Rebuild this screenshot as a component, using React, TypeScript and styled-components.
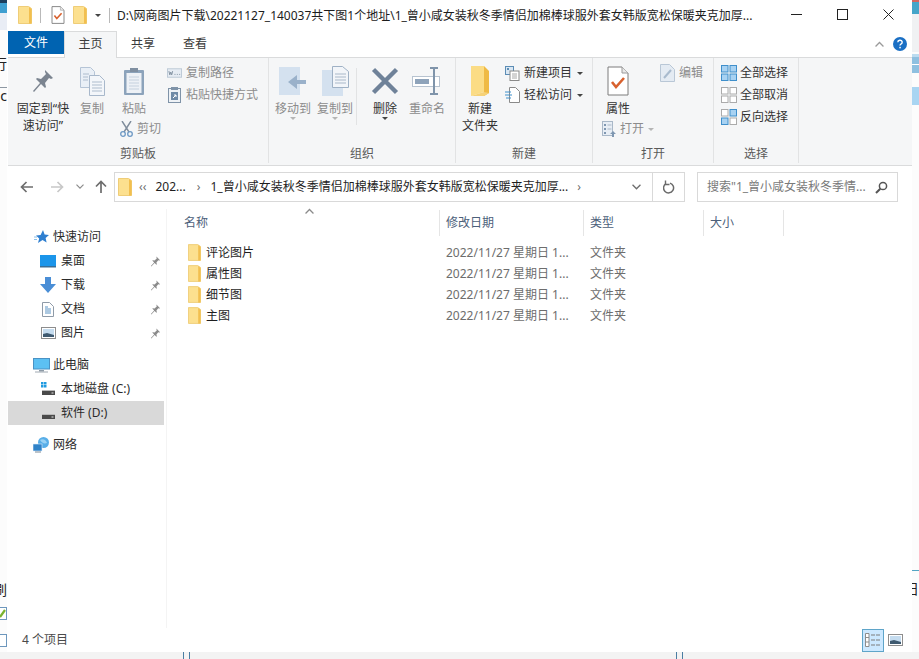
import styled, { createGlobalStyle } from 'styled-components';
import { ReactNode } from 'react';

const GlobalStyle = createGlobalStyle`
    html, body {
        margin: 0;
        padding: 0;
        background: #ffffff;
    }
    body {
        font-family: "Noto Sans", "Noto Sans CJK SC", sans-serif;
        font-size: 12px;
        line-height: 16px;
        color: #333333;
    }
    * {
        box-sizing: border-box;
    }
`;

const Page = styled.div`
    width: 919px;
    height: 659px;
    overflow: hidden;
    display: flex;
    flex-direction: column;
`;

const Desktop = styled.div`
    height: 652px;
    display: flex;
`;

const BottomStrip = styled.div`
    height: 7px;
    background: #f3f3f3;
    position: relative;
`;

const StripTick = styled.span<{ $left: number }>`
    position: absolute;
    top: 0;
    bottom: 0;
    left: ${p => p.$left}px;
    width: 7px;
    border-left: 1px solid #4b7ea3;
    border-right: 1px solid #4b7ea3;
`;

/* what can be seen of the windows behind this one */
const Sliver = styled.div`
    width: 7px;
    flex: none;
    position: relative;
    overflow: hidden;
    background: #fcfcfc;
`;

const BehindBand = styled.div<{ $top: number; $height: number; $color: string }>`
    position: absolute;
    left: 0;
    right: 0;
    top: ${p => p.$top}px;
    height: ${p => p.$height}px;
    background: ${p => p.$color};
`;

const BehindGlyph = styled.span<{ $top: number; $right: number; $color?: string }>`
    position: absolute;
    top: ${p => p.$top}px;
    right: ${p => p.$right}px;
    font-size: 14px;
    line-height: 16px;
    color: ${p => p.$color || '#222222'};
    white-space: nowrap;
`;

const BehindBox = styled.span<{ $top: number; $color: string }>`
    position: absolute;
    top: ${p => p.$top}px;
    left: -6px;
    width: 13px;
    height: 13px;
    border: 1px solid ${p => p.$color};
    background: #ffffff;
    display: flex;
`;

const Window = styled.div`
    width: 905px;
    flex: none;
    padding-left: 1px;
    background: #ffffff;
    display: flex;
    flex-direction: column;
`;

const TitleBar = styled.div`
    height: 30px;
    flex: none;
    display: flex;
    align-items: center;
    padding-left: 10px;
`;

const QuickIcon = styled.span<{ $gap: number }>`
    display: flex;
    margin-right: ${p => p.$gap}px;
`;

const TitleSep = styled.span<{ $gap: number }>`
    width: 1px;
    height: 15px;
    background: #b9b9b9;
    margin-right: ${p => p.$gap}px;
`;

const TitleText = styled.div`
    width: 660px;
    white-space: nowrap;
    overflow: hidden;
    color: #1c1c1c;
    margin-top: 1px;
`;

const WindowButtons = styled.div`
    display: flex;
    margin-left: auto;
    margin-top: -1px;
`;

const WindowButton = styled.span`
    width: 45px;
    height: 29px;
    display: flex;
    align-items: center;
    justify-content: center;
    margin-right: 1px;
`;

const TabRow = styled.div`
    height: 28px;
    flex: none;
    display: flex;
    align-items: flex-start;
    padding-top: 1px;
    margin-bottom: -1px;
    position: relative;
`;

const FileTab = styled.div`
    width: 56px;
    height: 23px;
    background: #0063b1;
    color: #ffffff;
    display: flex;
    align-items: center;
    justify-content: center;
`;

const Tab = styled.div<{ $active?: boolean }>`
    width: ${p => (p.$active ? 53 : 52)}px;
    height: 27px;
    padding-bottom: 3px;
    display: flex;
    align-items: center;
    justify-content: center;
    color: #3a3a3a;
    background: ${p => (p.$active ? '#f5f6f7' : 'transparent')};
    border: 1px solid ${p => (p.$active ? '#dadbdc' : 'transparent')};
    border-bottom: none;
    position: relative;
    z-index: 1;
`;

const TabEnd = styled.div`
    margin-left: auto;
    display: flex;
    align-items: center;
    height: 26px;
    gap: 9px;
    padding-right: 5px;
`;

const Ribbon = styled.div`
    height: 109px;
    flex: none;
    display: flex;
    background: #f5f6f7;
    border-top: 1px solid #dadbdc;
    border-bottom: 1px solid #dadbdc;
`;

const Group = styled.section<{ $width: number }>`
    width: ${p => p.$width}px;
    flex: none;
    display: flex;
    flex-direction: column;
    border-right: 1px solid #e2e3e4;
    margin-bottom: 2px;
`;

const GroupBody = styled.div`
    height: 86px;
    flex: none;
    padding-top: 4px;
    display: flex;
    align-items: flex-start;
`;

const GroupLabel = styled.div`
    text-align: center;
    color: #5a5a5a;
    line-height: 16px;
    padding-top: 2px;
`;

const BigButton = styled.div<{ $width: number; $off?: boolean }>`
    width: ${p => p.$width}px;
    flex: none;
    display: flex;
    flex-direction: column;
    align-items: center;
    text-align: center;
    line-height: 17px;
    color: ${p => (p.$off ? '#8c8c8c' : '#333333')};
`;

const IconSlot = styled.div`
    height: 38px;
    display: flex;
    align-items: center;
    justify-content: center;
`;

const Caret = styled.span<{ $off?: boolean }>`
    display: block;
    width: 0;
    height: 0;
    border-left: 3px solid transparent;
    border-right: 3px solid transparent;
    border-top: 3px solid ${p => (p.$off ? '#b5b5b5' : '#444444')};
`;

const SmallColumn = styled.div<{ $width?: number; $indent?: number }>`
    display: flex;
    flex-direction: column;
    flex: none;
    width: ${p => (p.$width ? `${p.$width}px` : 'auto')};
    margin-left: ${p => p.$indent || 0}px;
`;

const SmallButton = styled.div<{ $off?: boolean }>`
    height: 22px;
    display: flex;
    align-items: center;
    gap: 4px;
    white-space: nowrap;
    color: ${p => (p.$off ? '#8c8c8c' : '#333333')};
`;

const TileButton = styled(SmallButton)`
    gap: 3px;
`;

const SmallIcon = styled.span`
    width: 15px;
    height: 16px;
    flex: none;
    display: flex;
    align-items: center;
    justify-content: center;
`;

const RowCaret = styled(Caret)`
    margin-left: 1px;
`;

const ButtonSep = styled.div`
    width: 1px;
    height: 57px;
    margin: 6px 0 0;
    background: #e2e3e4;
    flex: none;
`;

const PasteColumn = styled.div`
    width: 48px;
    flex: none;
    display: flex;
    flex-direction: column;
`;

const CutRow = styled(SmallButton)<{ $indent: number }>`
    height: 20px;
    margin: 2px 0 0 ${p => p.$indent}px;
`;

const AddressRow = styled.div`
    height: 43px;
    flex: none;
    display: flex;
    align-items: flex-start;
    padding-top: 6px;
`;

const NavButtons = styled.div`
    width: 106px;
    flex: none;
    height: 30px;
    display: flex;
    align-items: center;
    padding-left: 12px;
`;

const NavButton = styled.span<{ $width: number; $gap?: number }>`
    width: ${p => p.$width}px;
    margin-left: ${p => p.$gap || 0}px;
    flex: none;
    display: flex;
    justify-content: center;
`;

const AddressBox = styled.div`
    width: 571px;
    height: 30px;
    flex: none;
    border: 1px solid #d9d9d9;
    display: flex;
    align-items: center;
    padding-left: 3px;
`;

const Crumbs = styled.div`
    flex: 1;
    display: flex;
    align-items: center;
    white-space: nowrap;
    color: #1e1e1e;
    margin-left: 5px;
`;

const CrumbArrow = styled.span<{ $before: number; $after: number }>`
    color: #6d6d6d;
    margin: 0 ${p => p.$after}px 0 ${p => p.$before}px;
    font-size: 12px;
`;

const AddressEnd = styled.span`
    width: 32px;
    height: 28px;
    flex: none;
    display: flex;
    align-items: center;
    justify-content: center;
`;

const RefreshCell = styled(AddressEnd)`
    border-left: 1px solid #d9d9d9;
`;

const SearchBox = styled.div`
    width: 201px;
    height: 30px;
    margin-left: 12px;
    flex: none;
    border: 1px solid #d9d9d9;
    display: flex;
    align-items: center;
    justify-content: space-between;
    padding: 0 9px 0 9px;
    color: #7a7a7a;
    white-space: nowrap;
`;

const Body = styled.div`
    flex: 1;
    min-height: 0;
    display: flex;
`;

const NavPane = styled.nav`
    width: 159px;
    flex: none;
    padding-top: 16px;
    border-right: 1px solid #f4f4f4;
    margin-right: 11px;
`;

const NavItem = styled.div<{ $level: number; $selected?: boolean; $gapAfter?: boolean }>`
    height: 24px;
    width: 156px;
    display: flex;
    align-items: center;
    padding-left: ${p => (p.$level === 0 ? 24 : 31)}px;
    gap: ${p => (p.$level === 0 ? 3 : 4)}px;
    background: ${p => (p.$selected ? '#d9d9d9' : 'transparent')};
    margin-bottom: ${p => (p.$gapAfter ? 8 : 0)}px;
    color: #2b2b2b;
    white-space: nowrap;
`;

const NavIcon = styled.span`
    width: 18px;
    height: 18px;
    flex: none;
    display: flex;
    align-items: center;
    justify-content: center;
`;

const NavPin = styled.span`
    margin-left: auto;
    margin-right: 3px;
    display: flex;
`;

const FilePane = styled.main`
    flex: 1;
    display: flex;
    flex-direction: column;
`;

const ColumnHeader = styled.header`
    height: 33px;
    flex: none;
    display: flex;
    position: relative;
`;

const HeaderCell = styled.div<{ $width: number }>`
    width: ${p => p.$width}px;
    flex: none;
    height: 26px;
    margin-top: 1px;
    border-right: 1px solid #e5e5e5;
    padding-left: 6px;
    display: flex;
    align-items: center;
    color: #4c607a;
`;

const SortMark = styled.span`
    position: absolute;
    top: -1px;
    left: 127px;
    display: flex;
`;

const FileRow = styled.div`
    height: 21px;
    display: flex;
    align-items: center;
`;

const NameCell = styled.div`
    width: 262px;
    flex: none;
    padding-left: 10px;
    display: flex;
    align-items: center;
    gap: 5px;
    color: #1e1e1e;
`;

const DateCell = styled.div`
    width: 144px;
    flex: none;
    padding-left: 6px;
    color: #6d6d6d;
    white-space: nowrap;
`;

const TypeCell = styled.div`
    flex: none;
    padding-left: 6px;
    color: #6d6d6d;
`;

const StatusBar = styled.footer`
    height: 24px;
    flex: none;
    display: flex;
    align-items: center;
    padding-left: 14px;
    color: #4a4a4a;
    padding-top: 0;
`;

const StatusViews = styled.div`
    margin-left: auto;
    display: flex;
    align-items: center;
    gap: 4px;
    padding-right: 9px;
`;

const ViewButton = styled.span`
    width: 22px;
    height: 23px;
    display: flex;
    align-items: center;
    justify-content: center;
    background: #cce8ff;
    border: 1px solid #5fa5c9;
`;

const Folder = ({ w = 14, h = 18 }: { w?: number; h?: number }) => (
    <svg width={w} height={h} viewBox="0 0 14 18">
        <path d="M0.5 0.5h10l3 2v15h-13z" fill="#fce08f" stroke="#efcd78" />
        <path d="M11 1l2.5 2v14.5h-2.5z" fill="#f2bf4f" />
    </svg>
);

const TallFolder = () => (
    <svg width="20" height="32" viewBox="0 0 20 32">
        <path d="M1 1h13v26l-13 4z" fill="#fbdc85" />
        <path d="M14 1l5 5v22l-5 3z" fill="#efba45" />
        <path d="M1 31l13-4 5 1-5 3z" fill="#f6d277" />
    </svg>
);

const DocCheck = ({ large }: { large?: boolean }) => (
    <svg width={large ? 22 : 14} height={large ? 30 : 18} viewBox="0 0 22 30">
        <path d="M1 1h14l6 6v22H1z" fill="#ffffff" stroke="#7d7d7d" strokeWidth={large ? 1 : 1.5} />
        <path d="M15 1v6h6" fill="#e8e8e8" stroke="#9a9a9a" />
        <path d="M5 16l4 5 8-9" fill="none" stroke="#d8612e" strokeWidth="2.6" />
    </svg>
);

const Pin = () => (
    <svg width="22" height="24" viewBox="0 0 22 24">
        <path d="M13 1l8 8-2 1-2-1-4 5 1 4-1 1-4-4-7 8-1-1 7-8-4-4 1-1 4 1 5-5-1-2z" fill="#7b8490" />
    </svg>
);

const SmallPin = () => (
    <svg width="11" height="11" viewBox="0 0 22 24">
        <path d="M13 1l8 8-2 1-2-1-4 5 1 4-1 1-4-4-7 8-1-1 7-8-4-4 1-1 4 1 5-5-1-2z" fill="#8b8b8b" />
    </svg>
);

const Sheets = () => (
    <svg width="25" height="29" viewBox="0 0 25 29">
        <path d="M.5.5h10l4 4v16H.5z" fill="#e9eff6" stroke="#b5c4d6" />
        <path d="M9.5 8.5h10l5 5v15h-15z" fill="#f3f6fa" stroke="#a8b8cb" />
        <path d="M12 15h10M12 18h10M12 21h10M12 24h10M3 7h6M3 10h5M3 13h5" stroke="#adbccd" />
    </svg>
);

const Clipboard = () => (
    <svg width="22" height="29" viewBox="0 0 22 29">
        <rect x="1" y="3" width="20" height="25" rx="1" fill="#8ca3bb" />
        <rect x="3.5" y="6" width="15" height="20" fill="#edf1f6" />
        <path d="M6 10h10M6 13h10M6 16h10M6 19h10M6 22h10" stroke="#c5d1de" />
        <rect x="7" y="1" width="8" height="4" fill="#7f8fa1" />
    </svg>
);

const Scissors = () => (
    <svg width="13" height="16" viewBox="0 0 13 16">
        <path d="M2 0l7 11M11 0L4 11" stroke="#7f8c9b" strokeWidth="1.4" fill="none" />
        <circle cx="3" cy="13" r="2.3" fill="none" stroke="#6d98c4" strokeWidth="1.3" />
        <circle cx="10" cy="13" r="2.3" fill="none" stroke="#6d98c4" strokeWidth="1.3" />
    </svg>
);

const CopyPath = () => (
    <svg width="16" height="10" viewBox="0 0 16 10">
        <rect x=".5" y=".5" width="15" height="9" fill="#e6ecf3" stroke="#bcc8d5" />
        <path d="M2 3l1 4 1-3 1 3 1-4M8 6.5h1M10.5 6.5h1M13 6.5h1" stroke="#7f8f9f" fill="none" />
    </svg>
);

const PasteShortcut = () => (
    <svg width="13" height="16" viewBox="0 0 13 16">
        <rect x=".5" y="1.5" width="12" height="14" fill="#eef2f6" stroke="#7f93a8" />
        <rect x="3" y="0" width="7" height="3" fill="#7f93a8" />
        <rect x="3" y="5" width="7" height="8" fill="#6e8aa6" />
        <path d="M5 11l3-3M6 8h2v2" stroke="#ffffff" fill="none" />
    </svg>
);

const MoveTo = () => (
    <svg width="28" height="30" viewBox="0 0 28 30">
        <rect x="0" y="1" width="21" height="28" fill="#d4e1ef" />
        <path d="M27 14H18V9l-9 7 9 7v-5h9z" fill="#9ab1ca" />
    </svg>
);

const CopyTo = () => (
    <svg width="27" height="31" viewBox="0 0 27 31">
        <rect x="0" y="4" width="21" height="26" fill="#d4e1ef" />
        <path d="M10.5.5h10l6 5v16h-16z" fill="#f2f5f9" stroke="#9fb1c5" />
        <path d="M13 8h11M13 11h11M13 14h11M13 17h11" stroke="#a9b8c9" />
    </svg>
);

const DeleteX = () => (
    <svg width="28" height="28" viewBox="0 0 28 28">
        <path d="M2.5 2.5l23 23M25.5 2.5l-23 23" stroke="#6f8299" strokeWidth="4.4" />
    </svg>
);

const Rename = () => (
    <svg width="30" height="28" viewBox="0 0 30 28">
        <rect x=".5" y="9.5" width="27" height="10" fill="#ffffff" stroke="#b7c3d0" />
        <rect x="3" y="12" width="14" height="5" fill="#8ea3ba" />
        <path d="M18 1h8M22 1v26M18 27h8" stroke="#7f94aa" strokeWidth="2" fill="none" />
    </svg>
);

const NewItem = () => (
    <svg width="15" height="15" viewBox="0 0 15 15">
        <rect x=".5" y=".5" width="8" height="8" fill="#d9e7f3" stroke="#5c8db5" />
        <rect x="2" y="2" width="2" height="2" fill="#5c8db5" />
        <rect x="5" y="5" width="9" height="9.5" fill="#ffffff" stroke="#8a8a8a" />
        <path d="M7 8h5M7 10h5M7 12h5" stroke="#a8a8a8" />
    </svg>
);

const EasyAccess = () => (
    <svg width="15" height="16" viewBox="0 0 15 16">
        <path d="M4.5.5h6l4 4v11h-10z" fill="#ffffff" stroke="#8a8a8a" />
        <path d="M0 5h6M0 8h7M1 11h5" stroke="#3f8fcb" strokeWidth="1.2" />
    </svg>
);

const EditDoc = () => (
    <svg width="15" height="18" viewBox="0 0 15 18">
        <path d="M.5.5h9l5 5v12H.5z" fill="#e4ebf3" stroke="#b9c7d6" />
        <path d="M4 14l7-8" stroke="#a9bbce" strokeWidth="2" />
    </svg>
);

const OpenDoc = () => (
    <svg width="14" height="16" viewBox="0 0 14 16">
        <rect x=".5" y=".5" width="10" height="14" fill="#e8eef5" stroke="#a9b8c8" />
        <path d="M2 3h2v2H2zM2 7h2v2H2zM2 11h2v2H2z" fill="#7f97b1" />
        <path d="M5.5 4h4M5.5 8h4" stroke="#a9b8c8" />
        <path d="M8 13l3-3 3 3h-2v3h-2v-3z" fill="#7f97b1" />
    </svg>
);

const Tiles = ({ on }: { on: boolean[] }) => (
    <svg width="16" height="16" viewBox="0 0 16 16">
        {[0, 1, 2, 3].map(i => (
            <rect
                key={i}
                x={i % 2 ? 9 : 0.5}
                y={i > 1 ? 9 : 0.5}
                width="6.5"
                height="6.5"
                fill={on[i] ? '#a8d2f2' : '#ffffff'}
                stroke={on[i] ? '#3f8fcb' : '#ababab'}
            />
        ))}
    </svg>
);

const BackArrow = ({ color, flip }: { color: string; flip?: boolean }) => (
    <svg width="14" height="12" viewBox="0 0 14 12" style={flip ? { transform: 'scaleX(-1)' } : undefined}>
        <path d="M13 6H2M6.5 1L1.5 6l5 5" stroke={color} strokeWidth="1.7" fill="none" />
    </svg>
);

const UpArrow = () => (
    <svg width="12" height="14" viewBox="0 0 12 14">
        <path d="M6 13V2M1 6.5l5-5 5 5" stroke="#6d6d6d" strokeWidth="1.7" fill="none" />
    </svg>
);

const Chevron = ({ color, up, size = 9 }: { color: string; up?: boolean; size?: number }) => (
    <svg width={size} height={size * 0.66} viewBox="0 0 9 6">
        <path d={up ? 'M.5 5.5l4-4 4 4' : 'M.5.8l4 4 4-4'} stroke={color} strokeWidth="1.3" fill="none" />
    </svg>
);

const Refresh = () => (
    <svg width="12" height="14" viewBox="0 0 12 14">
        <path d="M3 3.6a5 5 0 1 0 4-.5" stroke="#6a6a6a" strokeWidth="1.5" fill="none" />
        <path d="M2.5 0.5v4h4" stroke="#6a6a6a" strokeWidth="1.4" fill="none" />
    </svg>
);

const Magnifier = () => (
    <svg width="13" height="13" viewBox="0 0 13 13">
        <circle cx="8" cy="5" r="3.6" fill="none" stroke="#555555" strokeWidth="1.5" />
        <path d="M5.3 7.7L1 12" stroke="#555555" strokeWidth="2" />
    </svg>
);

const StarIcon = () => (
    <svg width="15" height="14" viewBox="0 0 15 14">
        <path d="M9 0l1.6 4.4L15 5l-3.4 3 1 4.6L8.5 10 4 13l1.2-4.6L2 5.5l4.6-.6z" fill="#2f7fd0" />
        <path d="M0 7h3M0 9.500h3" stroke="#8cc0ea" />
    </svg>
);

const DesktopIcon = () => (
    <svg width="16" height="13" viewBox="0 0 16 13">
        <rect x="0" y="0" width="16" height="11" fill="#1b95ea" />
        <rect x="0" y="11" width="16" height="1.500" fill="#3a6e96" />
    </svg>
);

const DownloadIcon = () => (
    <svg width="16" height="16" viewBox="0 0 16 16">
        <path d="M5 0h6v7h5l-8 9-8-9h5z" fill="#4a8ed6" />
    </svg>
);

const DocsIcon = () => (
    <svg width="12" height="15" viewBox="0 0 12 15">
        <path d="M.5.500h7l4 4v10H.5z" fill="#ffffff" stroke="#8f9ba8" />
        <path d="M3 5h3M3 7h6M3 9h6M3 11h6" stroke="#5b93c4" />
    </svg>
);

const PictureIcon = () => (
    <svg width="15" height="12" viewBox="0 0 15 12">
        <rect x=".5" y=".5" width="14" height="11" fill="#ffffff" stroke="#8d8d8d" />
        <rect x="2" y="2" width="11" height="8" fill="#c5dcef" />
        <path d="M2 10V7l4-1 7 2v2z" fill="#3f5a70" />
    </svg>
);

const PcIcon = () => (
    <svg width="17" height="15" viewBox="0 0 17 15">
        <rect x=".5" y=".5" width="16" height="10.500" fill="#5cc0f3" stroke="#4a92c4" />
        <path d="M6 12h5v1.500H6z" fill="#8d9aa6" />
        <path d="M2 14h13" stroke="#a0a9b2" />
    </svg>
);

const DiskIcon = ({ windows }: { windows?: boolean }) => (
    <svg width="15" height="14" viewBox="0 0 15 14">
        {windows && <path d="M0 0h2.500v2.500H0zM3 0h2.500v2.500H3zM0 3h2.500v2.500H0zM3 3h2.500v2.500H3z" fill="#1f9ae0" />}
        <path d="M1 8h13v1H1z" fill="#b9b9b9" />
        <rect x="1" y="9" width="13" height="4" fill="#4a4a4a" />
        <path d="M10.500 11h2" stroke="#e5e5e5" />
    </svg>
);

const NetworkIcon = () => (
    <svg width="17" height="16" viewBox="0 0 17 16">
        <circle cx="10.500" cy="5.500" r="5.500" fill="#58aee8" />
        <path d="M7 3c3-2 6 0 7 3-3 1-5 0-7-3z" fill="#9ad2f5" />
        <rect x="0" y="7" width="9" height="7" fill="#2f82c8" stroke="#dfeefa" strokeWidth=".6" />
        <path d="M2 15h6" stroke="#7d8a96" />
    </svg>
);

const DetailsView = () => (
    <svg width="16" height="14" viewBox="0 0 16 14">
        <path d="M.5.500h3.500v13H.5z" fill="#ffffff" stroke="#8d8d8d" />
        <path d="M.5 4.500h3.500M.5 9h3.500" stroke="#8d8d8d" />
        <path d="M6 2h4M11 2h4M6 7h4M11 7h4M6 12h4M11 12h4" stroke="#7d7d7d" />
    </svg>
);

function Big({ width, off, label, children, caret }: {
    width: number; off?: boolean; label: ReactNode; children: ReactNode; caret?: boolean;
}) {
    return (
        <BigButton $width={width} $off={off}>
            <IconSlot>{children}</IconSlot>
            <div>{label}</div>
            {caret && <Caret $off={off} />}
        </BigButton>
    );
}

const navItems = [
    { label: '快速访问', level: 0, icon: <StarIcon /> },
    { label: '桌面', level: 1, icon: <DesktopIcon />, pin: true },
    { label: '下载', level: 1, icon: <DownloadIcon />, pin: true },
    { label: '文档', level: 1, icon: <DocsIcon />, pin: true },
    { label: '图片', level: 1, icon: <PictureIcon />, pin: true, gapAfter: true },
    { label: '此电脑', level: 0, icon: <PcIcon /> },
    { label: '本地磁盘 (C:)', level: 1, icon: <DiskIcon windows /> },
    { label: '软件 (D:)', level: 1, icon: <DiskIcon />, selected: true, gapAfter: true },
    { label: '网络', level: 0, icon: <NetworkIcon /> },
];

const files = ['评论图片', '属性图', '细节图', '主图'];

export default function App() {
    return (
        <Page>
            <GlobalStyle />
            <Desktop>
                <Sliver>
                    <BehindBand $top={0} $height={3} $color="#1d3f5e" />
                    <BehindBand $top={3} $height={10} $color="#3f9fd0" />
                    <BehindBand $top={13} $height={17} $color="#e9edf5" />
                    <BehindGlyph $top={56} $right={0}>行</BehindGlyph>
                    <BehindBand $top={87} $height={1} $color="#8e98a3" />
                    <BehindGlyph $top={88} $right={0}>c</BehindGlyph>
                    <BehindGlyph $top={582} $right={0}>刷</BehindGlyph>
                    <BehindBox $top={607} $color="#6d97bd">
                        <svg width="11" height="11" viewBox="0 0 11 11">
                            <path d="M5 9l5-7" stroke="#7ab32f" strokeWidth="2.200" fill="none" />
                        </svg>
                    </BehindBox>
                    <BehindBox $top={634} $color="#6d97bd" />
                </Sliver>
                <Window>
                    <TitleBar>
                        <QuickIcon $gap={8}><Folder /></QuickIcon>
                        <TitleSep $gap={10} />
                        <QuickIcon $gap={8}><DocCheck /></QuickIcon>
                        <QuickIcon $gap={8}><Folder /></QuickIcon>
                        <QuickIcon $gap={8}><Caret /></QuickIcon>
                        <TitleSep $gap={7} />
                        <TitleText>D:\网商图片下载\20221127_140037共下图1个地址\1_曾小咸女装秋冬季情侣加棉棒球服外套女韩版宽松保暖夹克加厚...</TitleText>
                        <WindowButtons>
                            <WindowButton>
                                <svg width="11" height="11" viewBox="0 0 11 11"><path d="M0 5.500h11" stroke="#222222" /></svg>
                            </WindowButton>
                            <WindowButton>
                                <svg width="11" height="11" viewBox="0 0 11 11"><rect x=".5" y=".5" width="10" height="10" fill="none" stroke="#222222" /></svg>
                            </WindowButton>
                            <WindowButton>
                                <svg width="11" height="11" viewBox="0 0 11 11"><path d="M.5.500l10 10M10.500.500l-10 10" stroke="#222222" /></svg>
                            </WindowButton>
                        </WindowButtons>
                    </TitleBar>
                    <TabRow>
                        <FileTab>文件</FileTab>
                        <Tab $active>主页</Tab>
                        <Tab>共享</Tab>
                        <Tab>查看</Tab>
                        <TabEnd>
                            <Chevron color="#9a9a9a" up />
                            <svg width="14" height="14" viewBox="0 0 14 14">
                                <circle cx="7" cy="7" r="7" fill="#1a6fc4" />
                                <path d="M4.800 5.200a2.200 2 0 1 1 3.200 1.800c-.8.500-1 .8-1 1.600" stroke="#ffffff" strokeWidth="1.400" fill="none" />
                                <rect x="6.300" y="9.800" width="1.500" height="1.500" fill="#ffffff" />
                            </svg>
                        </TabEnd>
                    </TabRow>
                    <Ribbon>
                        <Group $width={261}>
                            <GroupBody>
                                <SmallColumn $indent={8} />
                                <Big width={54} label={<>固定到“快<br />速访问”</>}><Pin /></Big>
                                <Big width={44} off label="复制"><Sheets /></Big>
                                <PasteColumn>
                                    <Big width={40} off label="粘贴"><Clipboard /></Big>
                                    <CutRow $off $indent={6}>
                                        <Scissors />
                                        <span>剪切</span>
                                    </CutRow>
                                </PasteColumn>
                                <SmallColumn $indent={5}>
                                    <SmallButton $off><SmallIcon><CopyPath /></SmallIcon>复制路径</SmallButton>
                                    <SmallButton $off><SmallIcon><PasteShortcut /></SmallIcon>粘贴快捷方式</SmallButton>
                                </SmallColumn>
                            </GroupBody>
                            <GroupLabel>剪贴板</GroupLabel>
                        </Group>
                        <Group $width={187}>
                            <GroupBody>
                                <SmallColumn $indent={3} />
                                <Big width={42} off caret label="移动到"><MoveTo /></Big>
                                <Big width={42} off caret label="复制到"><CopyTo /></Big>
                                <ButtonSep />
                                <SmallColumn $indent={7} />
                                <Big width={42} caret label="删除"><DeleteX /></Big>
                                <Big width={42} off label="重命名"><Rename /></Big>
                            </GroupBody>
                            <GroupLabel>组织</GroupLabel>
                        </Group>
                        <Group $width={137}>
                            <GroupBody>
                                <SmallColumn $indent={2} />
                                <Big width={44} label={<>新建<br />文件夹</>}><TallFolder /></Big>
                                <SmallColumn $indent={3}>
                                    <SmallButton><SmallIcon><NewItem /></SmallIcon>新建项目<RowCaret /></SmallButton>
                                    <SmallButton><SmallIcon><EasyAccess /></SmallIcon>轻松访问<RowCaret /></SmallButton>
                                </SmallColumn>
                            </GroupBody>
                            <GroupLabel>新建</GroupLabel>
                        </Group>
                        <Group $width={121}>
                            <GroupBody>
                                <SmallColumn $width={60} $indent={7}>
                                    <BigButton $width={36}>
                                        <IconSlot><DocCheck large /></IconSlot>
                                        <div>属性</div>
                                    </BigButton>
                                    <CutRow $off $indent={2}>
                                        <OpenDoc />
                                        <span>打开</span>
                                        <Caret $off />
                                    </CutRow>
                                </SmallColumn>
                                <SmallColumn>
                                    <SmallButton $off><SmallIcon><EditDoc /></SmallIcon>编辑</SmallButton>
                                </SmallColumn>
                            </GroupBody>
                            <GroupLabel>打开</GroupLabel>
                        </Group>
                        <Group $width={85}>
                            <GroupBody>
                                <SmallColumn $indent={7}>
                                    <TileButton><Tiles on={[true, true, true, true]} />全部选择</TileButton>
                                    <TileButton><Tiles on={[false, false, false, false]} />全部取消</TileButton>
                                    <TileButton><Tiles on={[false, true, true, false]} />反向选择</TileButton>
                                </SmallColumn>
                            </GroupBody>
                            <GroupLabel>选择</GroupLabel>
                        </Group>
                    </Ribbon>
                    <AddressRow>
                        <NavButtons>
                            <NavButton $width={14}><BackArrow color="#6d6d6d" /></NavButton>
                            <NavButton $width={14} $gap={16}><BackArrow color="#c8c8c8" flip /></NavButton>
                            <NavButton $width={10} $gap={11}><Chevron color="#8a8a8a" size={8} /></NavButton>
                            <NavButton $width={14} $gap={9}><UpArrow /></NavButton>
                        </NavButtons>
                        <AddressBox>
                            <Folder />
                            <Crumbs>
                                <CrumbArrow $before={2} $after={9}>‹‹</CrumbArrow>
                                <span>202...</span>
                                <CrumbArrow $before={11} $after={10}>›</CrumbArrow>
                                <span>1_曾小咸女装秋冬季情侣加棉棒球服外套女韩版宽松保暖夹克加厚...</span>
                                <CrumbArrow $before={9} $after={9}>›</CrumbArrow>
                            </Crumbs>
                            <AddressEnd><Chevron color="#6d6d6d" /></AddressEnd>
                            <RefreshCell><Refresh /></RefreshCell>
                        </AddressBox>
                        <SearchBox>
                            <span>搜索"1_曾小咸女装秋冬季情...</span>
                            <Magnifier />
                        </SearchBox>
                    </AddressRow>
                    <Body>
                        <NavPane>
                            {navItems.map(item => (
                                <NavItem key={item.label} $level={item.level} $selected={item.selected} $gapAfter={item.gapAfter}>
                                    <NavIcon>{item.icon}</NavIcon>
                                    <span>{item.label}</span>
                                    {item.pin && <NavPin><SmallPin /></NavPin>}
                                </NavItem>
                            ))}
                        </NavPane>
                        <FilePane>
                            <ColumnHeader>
                                <SortMark><Chevron color="#8a8a8a" up /></SortMark>
                                <HeaderCell $width={262}>名称</HeaderCell>
                                <HeaderCell $width={144}>修改日期</HeaderCell>
                                <HeaderCell $width={120}>类型</HeaderCell>
                                <HeaderCell $width={80}>大小</HeaderCell>
                            </ColumnHeader>
                            {files.map(name => (
                                <FileRow key={name}>
                                    <NameCell>
                                        <Folder w={13} h={17} />
                                        <span>{name}</span>
                                    </NameCell>
                                    <DateCell>2022/11/27 星期日 1...</DateCell>
                                    <TypeCell>文件夹</TypeCell>
                                </FileRow>
                            ))}
                        </FilePane>
                    </Body>
                    <StatusBar>
                        4 个项目
                        <StatusViews>
                            <ViewButton><DetailsView /></ViewButton>
                            <PictureIcon />
                        </StatusViews>
                    </StatusBar>
                </Window>
                <Sliver>
                    <BehindBand $top={0} $height={2} $color="#d4665f" />
                    <BehindBand $top={2} $height={12} $color="#45a5c9" />
                    <BehindBand $top={14} $height={38} $color="#f0f1f3" />
                    <BehindBand $top={54} $height={3} $color="#bcdcf0" />
                    <BehindBand $top={57} $height={7} $color="#8fc0e0" />
                    <BehindBand $top={64} $height={1} $color="#ffffff" />
                    <BehindBand $top={65} $height={8} $color="#8fc0e0" />
                    <BehindBand $top={87} $height={18} $color="#a9d5f2" />
                    <BehindBand $top={570} $height={1} $color="#54a5c4" />
                    <BehindGlyph $top={581} $right={0}>日</BehindGlyph>
                </Sliver>
            </Desktop>
            <BottomStrip>
                <StripTick $left={183} />
                <StripTick $left={676} />
            </BottomStrip>
        </Page>
    );
}
